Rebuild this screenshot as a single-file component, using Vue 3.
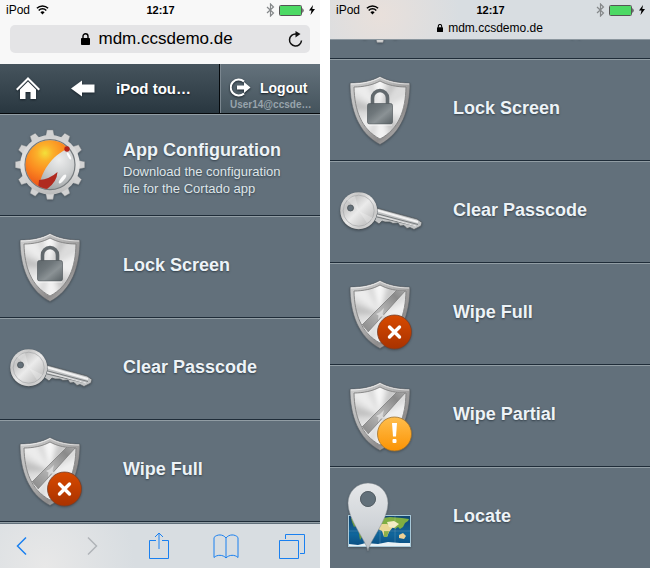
<template>
  <main class="screens">
    <!-- shared gradients and icon symbols -->
    <svg class="defs" width="0" height="0" aria-hidden="true">
      <defs>
        <linearGradient id="rim" x1="0" y1="0" x2="1" y2="1">
          <stop offset="0" stop-color="#d0d0d0" />
          <stop offset="0.4" stop-color="#b4b4b4" />
          <stop offset="0.7" stop-color="#8e8c8c" />
          <stop offset="1" stop-color="#d8d8d8" />
        </linearGradient>
        <linearGradient id="steel" x1="0" y1="0" x2="1" y2="1">
          <stop offset="0" stop-color="#e6e6e6" />
          <stop offset="0.28" stop-color="#c6c6c6" />
          <stop offset="0.5" stop-color="#ebebeb" />
          <stop offset="0.75" stop-color="#c8c8c8" />
          <stop offset="1" stop-color="#e8e8e8" />
        </linearGradient>
        <linearGradient id="gear" gradientUnits="userSpaceOnUse" x1="0" y1="16" x2="0" y2="86">
          <stop offset="0" stop-color="#cccccc" />
          <stop offset="0.5" stop-color="#e6e6e6" />
          <stop offset="1" stop-color="#b4b4b4" />
        </linearGradient>
        <radialGradient id="ball" cx="0.68" cy="0.4" r="0.6">
          <stop offset="0" stop-color="#eceded" />
          <stop offset="0.5" stop-color="#cfd1d2" />
          <stop offset="1" stop-color="#a2a6a8" />
        </radialGradient>
        <radialGradient id="orange" gradientUnits="userSpaceOnUse" cx="45" cy="39" r="32">
          <stop offset="0" stop-color="#f3e03a" />
          <stop offset="0.25" stop-color="#fbb02a" />
          <stop offset="0.6" stop-color="#fb8a20" />
          <stop offset="1" stop-color="#ee5c1a" />
        </radialGradient>
        <linearGradient id="lock" x1="0" y1="0" x2="1" y2="1">
          <stop offset="0" stop-color="#5e666a" />
          <stop offset="0.35" stop-color="#6f777b" />
          <stop offset="0.6" stop-color="#8b9295" />
          <stop offset="1" stop-color="#596165" />
        </linearGradient>
        <linearGradient id="band" x1="0" y1="1" x2="1" y2="0">
          <stop offset="0" stop-color="#868686" />
          <stop offset="0.45" stop-color="#b9b9b9" />
          <stop offset="0.8" stop-color="#8a8a8a" />
          <stop offset="1" stop-color="#a8a8a8" />
        </linearGradient>
        <linearGradient id="stop" x1="0" y1="0" x2="0" y2="1">
          <stop offset="0" stop-color="#d84a00" />
          <stop offset="1" stop-color="#a83200" />
        </linearGradient>
        <linearGradient id="warn" x1="0" y1="0" x2="0" y2="1">
          <stop offset="0" stop-color="#ffbe4c" />
          <stop offset="1" stop-color="#fb9304" />
        </linearGradient>
        <linearGradient id="pin" x1="0" y1="0" x2="0" y2="1">
          <stop offset="0" stop-color="#e6e8ea" />
          <stop offset="0.6" stop-color="#d0d4d8" />
          <stop offset="1" stop-color="#b9bec3" />
        </linearGradient>
        <linearGradient id="sea" x1="0" y1="0" x2="0" y2="1">
          <stop offset="0" stop-color="#12466f" />
          <stop offset="0.6" stop-color="#10669c" />
          <stop offset="1" stop-color="#0b4d80" />
        </linearGradient>
        <filter id="soft" x="-20%" y="-20%" width="140%" height="140%">
          <feGaussianBlur stdDeviation="2" />
        </filter>
        <clipPath id="face">
          <path d="M50 22C43 26 33 28 24 28C24.500 51 31 70 50 80C69 70 75.500 51 76 28C67 28 57 26 50 22Z" />
        </clipPath>
        <clipPath id="globe"><circle cx="50" cy="50.700" r="24.500" /></clipPath>
      </defs>

      <symbol id="shield" viewBox="0 0 104 100">
        <path d="M50 17.500C42 22 31 24 20 24C20 50 28 74 50 85.500C72 74 80 50 80 24C69 24 58 22 50 17.500Z" fill="url(#rim)" stroke="#555d63" stroke-width="0.600" />
        <path d="M50 18.500C42 23 32 25 21 25" fill="none" stroke="#ededed" />
        <path d="M50 18.500C58 23 68 25 79 25" fill="none" stroke="#e0e0e0" />
        <g clip-path="url(#face)">
          <rect x="20" y="18" width="60" height="66" fill="#dcdcdc" />
          <g filter="url(#soft)">
            <path d="M50 51L42 15L56 15Z" fill="#f6f6f6" />
            <path d="M50 51L20 30L32 18Z" fill="#ececec" />
            <path d="M50 51L18 38L18 52Z" fill="#c2c2c2" />
            <path d="M50 51L62 15L72 18Z" fill="#c6c6c6" />
            <path d="M50 51L84 34L84 62Z" fill="#efefef" />
            <path d="M50 51L20 66L32 84Z" fill="#ededed" />
            <path d="M50 51L44 86L60 86Z" fill="#f2f2f2" />
            <path d="M50 51L66 84L76 72Z" fill="#c8c8c8" />
          </g>
        </g>
        <path d="M50 22C43 26 33 28 24 28C24.500 51 31 70 50 80C69 70 75.500 51 76 28C67 28 57 26 50 22Z" fill="none" stroke="#7f7f7f" stroke-width="0.900" />
      </symbol>

      <symbol id="wipe" viewBox="0 0 104 100">
        <use href="#shield" width="104" height="100" />
        <g clip-path="url(#face)">
          <path d="M32 62L67 27L76 27L38 69Z" fill="url(#band)" />
          <path d="M32 62L67 27M38 69L76 27" stroke="#777" stroke-width="0.700" />
          <path d="M46 51L50 49L54 45L52.500 51L56 54L51 53.500L48 57L48.500 52.500Z" fill="#d9d9d9" />
        </g>
      </symbol>
    </svg>

    <!-- expanded browser bars, list at its start -->
    <section class="phone">
      <header class="browser">
        <div class="status">
          <span class="carrier">iPod
            <svg width="13" height="10" viewBox="0 0 13 10"><path d="M6.500 9.500L4.400 7.200A3 3 0 0 1 8.600 7.200Z" /><path d="M2.700 5.400A5.300 5.300 0 0 1 10.300 5.400M0.900 3.300A8 8 0 0 1 12.100 3.300" fill="none" stroke="#000" stroke-width="1.500" /></svg>
          </span>
          <time>12:17</time>
          <span class="power">
            <svg width="9" height="14" viewBox="0 0 9 14"><path d="M1 4L7.500 10L4.500 13V1L7.500 4L1 10" fill="none" stroke="#85888a" stroke-width="1.200" /></svg>
            <svg width="26" height="11" viewBox="0 0 26 11"><rect x="0.500" y="0.500" width="22" height="10" rx="1" fill="#fff" stroke="#555" /><rect x="1" y="1" width="21" height="9" fill="#4cd964" /><path d="M23.500 3Q25.500 5.500 23.500 8Z" /></svg>
            <svg width="6" height="10" viewBox="0 0 6 10"><path d="M4 0L0 5.500H2.500L1.500 10L6 4H3.300Z" /></svg>
          </span>
        </div>
        <form class="address" @submit.prevent>
          <label for="url" aria-label="Address">
            <svg width="9" height="12" viewBox="0 0 9 12"><rect y="5" width="9" height="7" rx="0.800" /><path d="M2 5.500V3.200A2.500 2.500 0 0 1 7 3.200V5.500" fill="none" stroke="#000" stroke-width="1.400" /></svg>
          </label>
          <input id="url" v-model="url" type="text" />
          <button type="button" class="reload" aria-label="Reload">
            <svg width="16" height="17" viewBox="0 0 16 17"><path d="M13.500 9.500A6 6 0 1 1 8 3H10" fill="none" stroke="#111" stroke-width="1.500" /><path d="M7.500 0L12.500 3L7.500 6.500Z" fill="#111" /></svg>
          </button>
        </form>
      </header>

      <nav class="appbar">
        <a href="#" class="home" aria-label="Home">
          <svg width="24" height="23" viewBox="0 0 24 23" fill="#fff"><path d="M12 0L24 12L22.500 13.500L12 3L1.500 13.500L0 12Z" /><path d="M12 4.500L20 12.500V22H14.500V15H9.500V22H4V12.500Z" /></svg>
        </a>
        <a href="#" class="back" aria-label="Back">
          <svg width="24" height="17" viewBox="0 0 24 17" fill="#fff"><path d="M0 8.500L11 0.500V4.500H23.500V12.500H11V16.500Z" /></svg>
        </a>
        <h1>iPod tou…</h1>
        <button type="button" class="logout">
          <span class="action">
            <svg width="22" height="19" viewBox="0 0 22 19"><path d="M14 3.500A8 8 0 1 0 14 15.500" fill="none" stroke="#fff" stroke-width="2" /><path d="M7 7.500H14V4L20.500 9.500L14 15V11.500H7Z" fill="#fff" /></svg>
            Logout
          </span>
          <small>User14@ccsde…</small>
        </button>
      </nav>

      <div class="viewport">
        <ul class="menu">
          <li v-for="item in items" :key="item.icon">
            <a href="#">
              <svg class="icon" width="104" height="100" viewBox="0 1 104 100" v-html="icons[item.icon]"></svg>
              <span class="label" :class="{ detailed: item.text }">
                <strong>{{ item.title }}</strong>
                <span v-if="item.text" class="text">{{ item.text }}</span>
              </span>
            </a>
          </li>
        </ul>
      </div>

      <footer class="toolbar">
        <button type="button" aria-label="Back">
          <svg width="28" height="28" viewBox="0 0 28 28"><path d="M18 5.500L9.500 14L18 22.500" stroke-width="1.500" /></svg>
        </button>
        <button type="button" aria-label="Forward" disabled>
          <svg width="28" height="28" viewBox="0 0 28 28"><path d="M12 5.500L20.500 14L12 22.500" stroke-width="1.500" /></svg>
        </button>
        <button type="button" aria-label="Share">
          <svg width="28" height="28" viewBox="0 0 28 28"><path d="M13 8.500H6.500V26.500H25.500V8.500H19M16 17V1M12 5L16 1L20 5" /></svg>
        </button>
        <button type="button" aria-label="Bookmarks">
          <svg width="28" height="28" viewBox="0 0 28 28"><path d="M15 6C12 2 6 2 3 5.500V25.500C6 22.500 12 22.500 15 26C18 22.500 24 22.500 27 25.500V5.500C24 2 18 2 15 6V26" /></svg>
        </button>
        <button type="button" aria-label="Tabs">
          <svg width="28" height="28" viewBox="0 0 28 28"><path d="M1.500 8.500H20.500V26.500H1.500ZM7.500 7V2.500H26.500V21.500H22" /></svg>
        </button>
      </footer>
    </section>

    <!-- collapsed browser bar, list scrolled to its end -->
    <section class="phone">
      <header class="browser compact">
        <div class="status">
          <span class="carrier">iPod
            <svg width="13" height="10" viewBox="0 0 13 10"><path d="M6.500 9.500L4.400 7.200A3 3 0 0 1 8.600 7.200Z" /><path d="M2.700 5.400A5.300 5.300 0 0 1 10.300 5.400M0.900 3.300A8 8 0 0 1 12.100 3.300" fill="none" stroke="#000" stroke-width="1.500" /></svg>
          </span>
          <time>12:17</time>
          <span class="power">
            <svg width="9" height="14" viewBox="0 0 9 14"><path d="M1 4L7.500 10L4.500 13V1L7.500 4L1 10" fill="none" stroke="#85888a" stroke-width="1.200" /></svg>
            <svg width="26" height="11" viewBox="0 0 26 11"><rect x="0.500" y="0.500" width="22" height="10" rx="1" fill="#fff" stroke="#555" /><rect x="1" y="1" width="21" height="9" fill="#4cd964" /><path d="M23.500 3Q25.500 5.500 23.500 8Z" /></svg>
            <svg width="6" height="10" viewBox="0 0 6 10"><path d="M4 0L0 5.500H2.500L1.500 10L6 4H3.300Z" /></svg>
          </span>
        </div>
        <div class="site">
          <svg width="6" height="8" viewBox="0 0 9 12"><rect y="5" width="9" height="7" rx="0.800" /><path d="M2 5.500V3.200A2.500 2.500 0 0 1 7 3.200V5.500" fill="none" stroke="#000" stroke-width="1.600" /></svg>
          {{ url }}
        </div>
      </header>
      <div class="viewport end">
        <ul class="menu">
          <li v-for="item in items" :key="item.icon">
            <a href="#">
              <svg class="icon" width="104" height="100" viewBox="0 1 104 100" v-html="icons[item.icon]"></svg>
              <span class="label" :class="{ detailed: item.text }">
                <strong>{{ item.title }}</strong>
                <span v-if="item.text" class="text">{{ item.text }}</span>
              </span>
            </a>
          </li>
        </ul>
      </div>
    </section>
  </main>
</template>

<script setup>
import { ref } from 'vue'

const url = ref('mdm.ccsdemo.de')

const items = [
  { icon: 'config', title: 'App Configuration', text: 'Download the configuration file for the Cortado app' },
  { icon: 'lock', title: 'Lock Screen' },
  { icon: 'key', title: 'Clear Passcode' },
  { icon: 'wipeFull', title: 'Wipe Full' },
  { icon: 'wipePartial', title: 'Wipe Partial' },
  { icon: 'locate', title: 'Locate' }
]

// twelve teeth around the gear body
const teeth = Array.from({ length: 12 }, (_, i) =>
  `<path d="M45.500 23L47 16H53L54.500 23Z" transform="rotate(${i * 30} 50 50.700)"/>`
).join('')

const icons = {
  config: `
    <g fill="#d2d2d2" stroke="#7d8488" stroke-width="0.400">${teeth}</g>
    <circle cx="50" cy="50.700" r="29.800" fill="url(#gear)"/>
    <circle cx="50" cy="50.700" r="25" fill="url(#ball)" stroke="#767b7e" stroke-width="1.200"/>
    <g clip-path="url(#globe)">
      <path d="M69 33L60 20L20 20V80H39C38 62 50 42 69 34Z" fill="url(#orange)"/>
      <path d="M39 66Q50 65 57.500 58Q57 68 47 75L41 78L38 76Z" fill="#b02a20"/>
    </g>
    <circle cx="67" cy="35" r="2.700" fill="#b5241b"/>
    <ellipse cx="62.500" cy="65" rx="1.800" ry="5.500" transform="rotate(38 62.500 65)" fill="#fff" fill-opacity="0.900"/>
    <ellipse cx="69" cy="42" rx="1.200" ry="4" transform="rotate(-28 69 42)" fill="#fff"/>`,
  lock: `
    <use href="#shield" width="104" height="100"/>
    <path d="M42.500 46V39A7.500 7.500 0 0 1 57.500 39V46" fill="none" stroke="#62696d" stroke-width="3.600"/>
    <rect x="37.500" y="44.500" width="25" height="20.500" rx="2" fill="url(#lock)" stroke="#555c60" stroke-width="0.700"/>
    <path d="M38 66H62" stroke="#fff" stroke-opacity="0.700"/>`,
  key: `
    <path d="M43 46L87 58L92 61.500L91 65L84 68.500L80 66.500L77 67.500L74 64.500L70 65L68 62L63 62.500L60 61L55 61L52 60L49 63L45 60L41 59Z" fill="#c2c4c5" stroke="#4c5358" stroke-width="0.700"/>
    <path d="M46 49L88 61" stroke="#f2f2f2" stroke-width="2.200"/>
    <path d="M46 52.500L88 63.500M47 56L84 64.500" stroke="#777b7d"/>
    <path d="M46 54L86 65" stroke="#e7e7e7"/>
    <circle cx="28.700" cy="50.200" r="18.800" fill="#495157"/>
    <circle cx="28.700" cy="49.700" r="18.500" fill="url(#steel)"/>
    <circle cx="28.700" cy="49.700" r="15.500" fill="none" stroke="#a6a8a9" stroke-width="0.700"/>
    <path d="M29 50L16 38L25 35ZM29 50L43 57L37 62Z" fill="#fff" fill-opacity="0.250"/>
    <circle cx="20.500" cy="47" r="3" fill="#65717a" stroke="#4a5257" stroke-width="0.800"/>`,
  wipeFull: `
    <use href="#wipe" width="104" height="100"/>
    <circle cx="64.500" cy="69" r="17" fill="url(#stop)" stroke="#73402c" stroke-width="0.800"/>
    <path d="M59.500 64L69.500 74M69.500 64L59.500 74" stroke="#fff" stroke-width="3.400" stroke-linecap="round"/>`,
  wipePartial: `
    <use href="#wipe" width="104" height="100"/>
    <circle cx="64.500" cy="69" r="17" fill="url(#warn)" stroke="#9c7132" stroke-width="0.800"/>
    <path d="M62 58H67L66 71.500H63Z" fill="#fff"/>
    <rect x="62.500" y="74" width="4" height="4" rx="1" fill="#fff"/>`,
  locate: `
    <rect x="18.500" y="48.500" width="62" height="31" fill="url(#sea)" stroke="#a8c8d8"/>
    <path d="M21 51L34 50L32 55L28 57L24 60L22 55ZM28 61L34 62L33 68L30 73Z" fill="#6a9a3c"/>
    <path d="M47 53L53 51L60 50L72 51L79 52L78 54L75 56L73 60L70 62L68 60L65 62L63 58L59 60L55 57L48 57Z" fill="#7fae42"/>
    <path d="M50 57L57 57L63 60L59 65L57 70L54 70L52 64L48 62L47 59Z" fill="#ead894"/>
    <path d="M54 64L59 64L57 70L54 70Z" fill="#8cb04a"/>
    <path d="M57 55L64 54L69 57L64 61L59 60Z" fill="#f3ecc4"/>
    <path d="M69 68L73 66L76 69L74 72L69 71Z" fill="#ecd095"/>
    <path d="M19 79V77L28 78L36 76L48 77L58 75L70 76L80 76V79Z" fill="#e8f1f5"/>
    <path d="M34 49V79M50 49V79M65 49V79M19 64H80" stroke="#fff" stroke-opacity="0.150"/>
    <path d="M38 84C36 73 18 53 18 36A20 20 0 0 1 58 36C58 53 40 73 38 84ZM38 24.500A7.500 7.500 0 1 0 38 39.500A7.500 7.500 0 1 0 38 24.500Z" fill="url(#pin)" stroke="#80898f" stroke-width="0.500" fill-rule="evenodd"/>
    <circle cx="38" cy="32" r="7.500" fill="#62707a" stroke="#555f66"/>`
}
</script>

<style>
body {
  margin: 0;
  background: #fff;
}
</style>

<style scoped>
.screens {
  display: grid;
  grid-template-columns: 1fr 1fr;
  gap: 10px;
  height: 100vh;
  font-family: "Liberation Sans", Arial, sans-serif;
  color: #000;
}
.defs {
  position: absolute;
}
.phone {
  display: flex;
  flex-direction: column;
  min-width: 0;
  min-height: 0;
  background: #62707b;
}
svg {
  display: block;
  flex: none;
}
button {
  padding: 0;
  border: 0;
  background: none;
  font: inherit;
  color: inherit;
}

/* browser bars */
.browser {
  flex: none;
  padding-bottom: 11px;
  background: #f8f8f8;
}
.compact {
  padding-bottom: 3px;
  background: radial-gradient(circle at 50px 15px, #e9e0db, #d8dde1 80px);
}
.status {
  display: grid;
  grid-template-columns: 1fr auto 1fr;
  align-items: center;
  height: 20px;
  padding: 0 5px 0 6px;
  font-size: 12px;
}
.status time {
  font-size: 11px;
  font-weight: bold;
}
.carrier,
.power {
  display: flex;
  align-items: center;
  gap: 6px;
}
.power {
  justify-content: flex-end;
  gap: 4px;
}
.address {
  display: flex;
  align-items: center;
  justify-content: center;
  gap: 9px;
  height: 28px;
  margin: 5px 10px 0;
  padding: 0 6px 0 30px;
  border-radius: 5px;
  background: #e4e4e6;
}
.address label {
  margin-left: auto;
}
.address input {
  width: 140px;
  padding: 0;
  border: 0;
  outline: 0;
  background: none;
  font: inherit;
  font-size: 17px;
}
.reload {
  margin-left: auto;
}
.site {
  display: flex;
  align-items: center;
  justify-content: center;
  gap: 5px;
  height: 16px;
  font-size: 12px;
}

/* app header */
.appbar {
  display: flex;
  flex: none;
  height: 49px;
  border-bottom: 1px solid #05090c;
  background: linear-gradient(#46545d, #293740);
  color: #fff;
  text-shadow: 0 1px 2px #10181e;
}
.home,
.back {
  display: flex;
  align-items: center;
  justify-content: center;
  width: 55px;
}
.home svg,
.back svg,
.logout svg {
  filter: drop-shadow(0 1px 1px #18222a);
}
.appbar h1 {
  flex: 1;
  margin: 0;
  padding-left: 6px;
  font-size: 15px;
  line-height: 50px;
  white-space: nowrap;
}
.logout {
  width: 101px;
  padding: 8px 8px 0 10px;
  box-sizing: border-box;
  border-left: 1px solid #05090c;
  box-shadow: inset 1px 0 #7b8790;
  background: linear-gradient(#64727c, #44535c);
  text-align: left;
  font-weight: bold;
  text-shadow: inherit;
}
.action {
  display: flex;
  align-items: center;
  gap: 8px;
  height: 24px;
  font-size: 14px;
}
.logout small {
  display: block;
  font-size: 10px;
  line-height: 10px;
  color: #98a4ac;
  white-space: nowrap;
  text-shadow: none;
}

/* menu list */
.viewport {
  display: flex;
  flex: 1;
  flex-direction: column;
  min-height: 0;
  overflow: hidden;
}
.end {
  justify-content: flex-end;
  border-top: 1px solid #8b969e;
}
.menu {
  flex: none;
  margin: 0 0 -1px;
  padding: 0;
  list-style: none;
}
.menu a {
  display: flex;
  align-items: center;
  height: 100px;
  border-top: 1px solid #919da4;
  border-bottom: 1px solid #1f2c38;
  background: #62707b;
  color: #edf3f7;
  text-decoration: none;
  text-shadow: 0 1px 2px #333f49;
}
.icon {
  filter: drop-shadow(0 1px 1px #46515a);
}
.label {
  padding: 0 0 4px 19px;
}
.detailed {
  padding-top: 6px;
  padding-bottom: 0;
}
.label strong {
  display: block;
  font-size: 18px;
  line-height: 22px;
}
.text {
  display: block;
  max-width: 170px;
  padding-top: 2px;
  font-size: 13px;
  line-height: 17px;
  color: #dfe6ea;
}

/* bottom toolbar */
.toolbar {
  display: flex;
  flex: none;
  align-items: center;
  justify-content: space-between;
  height: 44px;
  padding: 0 14px 0 8px;
  background: radial-gradient(circle at 45px 42px, #e8e8e8, #d8dde1 90px);
}
.toolbar svg {
  fill: none;
  stroke: #1a80f0;
  stroke-width: 1;
}
.toolbar button:disabled svg {
  stroke: #b0b4b8;
}
</style>
